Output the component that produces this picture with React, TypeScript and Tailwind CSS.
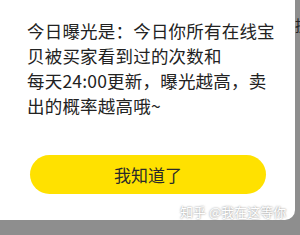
export default function App() {
  return (
    <div className="relative h-[235px] w-[300px] overflow-hidden bg-[#8e8e8e] font-['Noto_Sans_CJK_SC',sans-serif]">
      <span className="absolute left-[295px] top-[14px] text-[15px] text-[#222]">提</span>
      <div className="relative -ml-[12px] -mt-[12px] flex h-[232px] w-[307px] flex-col rounded-[10px] bg-white pl-[39px] pt-[30px]">
        <p className="text-[17.5px] leading-[25px] tracking-[0.2px] text-[#222]">
          今日曝光是：今日你所有在线宝
          <br />
          贝被买家看到过的次数和
          <br />
          每天24:00更新，曝光越高，卖
          <br />
          出的概率越高哦~
        </p>
        <button className="ml-[3px] mt-[37px] flex h-[44px] w-[236px] items-center justify-center rounded-full bg-[#ffe100] text-[17px] text-[#2a2a2a]">
          我知道了
        </button>
        <div className="ml-[153px] mt-[10px] text-[13px] leading-[16px] text-white [text-shadow:0_0_2px_#777]">
          知乎 @我在这等你
        </div>
      </div>
    </div>
  )
}
